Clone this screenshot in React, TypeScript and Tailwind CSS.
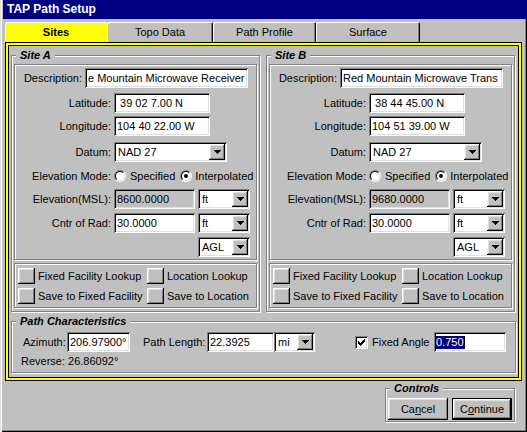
import React from "react";

const sunken =
  "shadow-[inset_1px_1px_0_#808080,inset_-1px_-1px_0_#ffffff,inset_2px_2px_0_#000000,inset_-2px_-2px_0_#dfdfdf]";
const raised =
  "shadow-[inset_-1px_-1px_0_#000000,inset_1px_1px_0_#ffffff,inset_-2px_-2px_0_#808080,inset_2px_2px_0_#dfdfdf]";
const etched = "border border-[#808080] shadow-[inset_1px_1px_0_#ffffff,1px_1px_0_#ffffff]";

function DropArrow() {
  return (
    <svg width="7" height="4" viewBox="0 0 7 4" shapeRendering="crispEdges">
      <path d="M0 0h7v1H0zM1 1h5v1H1zM2 2h3v1H2zM3 3h1v1H3z" fill="#000" />
    </svg>
  );
}

function DropBtn() {
  return (
    <div className={`w-[16px] h-[16px] shrink-0 bg-[#c0c0c0] ${raised} flex items-center justify-center`}>
      <DropArrow />
    </div>
  );
}

function Select({ cls, value }: { cls: string; value: string }) {
  return (
    <div className={`${cls} h-[20px] shrink-0 bg-white ${sunken} flex items-center pl-[4px] pr-[2px]`}>
      <span className="flex-1 whitespace-nowrap">{value}</span>
      <DropBtn />
    </div>
  );
}

function TextBox({ cls, value, disabled }: { cls: string; value: string; disabled?: boolean }) {
  return (
    <div
      className={`${cls} h-[20px] shrink-0 ${disabled ? "bg-[#c0c0c0]" : "bg-white"} ${sunken} flex items-center pl-[3px] whitespace-pre overflow-hidden`}
    >
      {value}
    </div>
  );
}

function Radio({ checked }: { checked?: boolean }) {
  return (
    <span className="w-[12px] h-[12px] shrink-0 rounded-full border border-t-[#808080] border-l-[#808080] border-r-white border-b-white flex">
      <span className="flex-1 rounded-full bg-white border border-t-black border-l-black border-r-[#dfdfdf] border-b-[#dfdfdf] flex items-center justify-center">
        {checked && <span className="w-[4px] h-[4px] rounded-full bg-black" />}
      </span>
    </span>
  );
}

function Checkbox() {
  return (
    <span className={`w-[13px] h-[13px] shrink-0 bg-white ${sunken} flex items-center justify-center`}>
      <svg width="7" height="7" viewBox="0 0 7 7" shapeRendering="crispEdges">
        <path
          d="M6 0h1v1H6zM5 1h2v1H5zM0 2h1v1H0zM4 2h3v1H4zM0 3h2v1H0zM3 3h3v1H3zM0 4h5v1H0zM1 5h3v1H1zM2 6h1v1H2z"
          fill="#000"
        />
      </svg>
    </span>
  );
}

function SquareBtn() {
  return <span className={`w-[17px] h-[16px] shrink-0 bg-[#c0c0c0] ${raised}`} />;
}

function GroupTitle({ children }: { children: React.ReactNode }) {
  return (
    <span className="absolute -top-[7px] left-[4px] px-[4px] bg-[#c0c0c0] font-bold italic leading-[13px] whitespace-nowrap">
      {children}
    </span>
  );
}

function Label({ cls, children }: { cls: string; children: React.ReactNode }) {
  return <span className={`${cls} shrink-0 text-right whitespace-nowrap`}>{children}</span>;
}

function Site({
  title,
  desc,
  lat,
  lon,
  elev,
}: {
  title: string;
  desc: string;
  lat: string;
  lon: string;
  elev: string;
}) {
  return (
    <div className={`relative w-[249px] h-[257px] ${etched} pt-[8px] px-[2px] flex flex-col`}>
      <GroupTitle>{title}</GroupTitle>
      <div className={`${etched} h-[196px] flex flex-col pt-[3px]`}>
        <div className="flex items-center h-[20px]">
          <Label cls="w-[67px]">Description:</Label>
          <TextBox cls="w-[163px] ml-[3px]" value={desc} />
        </div>
        <div className="flex items-center h-[20px] mt-[5px]">
          <Label cls="w-[96px]">Latitude:</Label>
          <TextBox cls="w-[96px] ml-[3px]" value={lat} />
        </div>
        <div className="flex items-center h-[20px] mt-[3px]">
          <Label cls="w-[96px]">Longitude:</Label>
          <TextBox cls="w-[96px] ml-[3px]" value={lon} />
        </div>
        <div className="flex items-center h-[20px] mt-[6px]">
          <Label cls="w-[96px]">Datum:</Label>
          <Select cls="w-[113px] ml-[3px]" value="NAD 27" />
        </div>
        <div className="flex items-center h-[14px] mt-[7px]">
          <Label cls="w-[96px]">Elevation Mode:</Label>
          <span className="ml-[3px] flex items-center">
            <Radio />
          </span>
          <span className="ml-[4px] whitespace-nowrap">Specified</span>
          <span className="ml-[5px] flex items-center">
            <Radio checked />
          </span>
          <span className="ml-[3px] whitespace-nowrap">Interpolated</span>
        </div>
        <div className="flex items-center h-[20px] mt-[6px]">
          <Label cls="w-[96px]">Elevation(MSL):</Label>
          <TextBox cls="w-[81px] ml-[3px]" value={elev} disabled />
          <Select cls="w-[52px] ml-[3px]" value="ft" />
        </div>
        <div className="flex items-center h-[20px] mt-[4px]">
          <Label cls="w-[96px]">Cntr of Rad:</Label>
          <TextBox cls="w-[81px] ml-[3px]" value="30.0000" />
          <Select cls="w-[52px] ml-[3px]" value="ft" />
        </div>
        <div className="flex items-center h-[20px] mt-[4px]">
          <Select cls="w-[52px] ml-[183px]" value="AGL" />
        </div>
      </div>
      <div className={`${etched} h-[45px] mt-[3px] pt-[4px] pl-[3px] grid grid-cols-[129px_auto] gap-y-[4px] content-start`}>
        <div className="flex items-center gap-[3px] h-[16px]">
          <SquareBtn />
          <span className="whitespace-nowrap">Fixed Facility Lookup</span>
        </div>
        <div className="flex items-center gap-[3px] h-[16px]">
          <SquareBtn />
          <span className="whitespace-nowrap">Location Lookup</span>
        </div>
        <div className="flex items-center gap-[3px] h-[16px]">
          <SquareBtn />
          <span className="whitespace-nowrap">Save to Fixed Facility</span>
        </div>
        <div className="flex items-center gap-[3px] h-[16px]">
          <SquareBtn />
          <span className="whitespace-nowrap">Save to Location</span>
        </div>
      </div>
    </div>
  );
}

function Tab({ label, cls, selected }: { label: string; cls: string; selected?: boolean }) {
  return (
    <div
      className={`${cls} h-[20px] flex items-center justify-center rounded-tl-[2px] rounded-tr-[2px] ${
        selected
          ? "bg-[#ffff00] font-bold shadow-[inset_1px_1px_0_#ffffff]"
          : "bg-[#c0c0c0] shadow-[inset_1px_1px_0_#ffffff,inset_-1px_0_0_#000000,inset_-2px_0_0_#808080]"
      }`}
    >
      {label}
    </div>
  );
}

function PushButton({ children, isDefault }: { children: React.ReactNode; isDefault?: boolean }) {
  if (isDefault) {
    return (
      <div className="w-[60px] h-[22px] border border-black flex">
        <div className={`flex-1 bg-[#c0c0c0] ${raised} flex items-center justify-center`}>{children}</div>
      </div>
    );
  }
  return (
    <div className={`w-[60px] h-[22px] bg-[#c0c0c0] ${raised} flex items-center justify-center`}>{children}</div>
  );
}

export default function App() {
  return (
    <div className="w-[527px] h-[432px] bg-[#c0c0c0] flex flex-col overflow-hidden text-[11px] leading-[13px] text-black [font-family:'Liberation_Sans',Arial,sans-serif] shadow-[inset_1px_0_0_#dfdfdf,inset_2px_0_0_#ffffff,inset_-1px_-1px_0_#000000,inset_-2px_-2px_0_#808080]">
      <div className="h-[19px] ml-[3px] bg-[#000080] text-white font-bold text-[12px] flex items-center pl-[4px]">
        TAP Path Setup
      </div>
      <div className="mt-[3px] ml-[5px] flex">
        <Tab label="Sites" cls="w-[102px]" selected />
        <Tab label="Topo Data" cls="w-[106px]" />
        <Tab label="Path Profile" cls="w-[103px]" />
        <Tab label="Surface" cls="w-[104px]" />
      </div>
      <div className="ml-[5px] w-[517px] h-[339px] shrink-0 border border-black shadow-[inset_0_0_0_2px_#ffff00,inset_0_0_0_3px_#000000] pt-[12px] pl-[5px] flex flex-col">
        <div className="flex gap-[6px]">
          <Site
            title="Site A"
            desc="e Mountain Microwave Receiver"
            lat=" 39 02 7.00 N"
            lon="104 40 22.00 W"
            elev="8600.0000"
          />
          <Site
            title="Site B"
            desc="Red Mountain Microwave Trans"
            lat=" 38 44 45.00 N"
            lon="104 51 39.00 W"
            elev="9680.0000"
          />
        </div>
        <div className={`relative mt-[9px] w-[505px] h-[52px] ${etched} pt-[10px] pl-[9px] flex flex-col`}>
          <GroupTitle>Path Characteristics</GroupTitle>
          <div className="flex items-center h-[20px]">
            <span className="w-[46px] shrink-0 pl-[2px] whitespace-nowrap">Azimuth:</span>
            <TextBox cls="w-[63px]" value="206.97900°" />
            <span className="w-[77px] shrink-0 pl-[13px] whitespace-nowrap">Path Length:</span>
            <TextBox cls="w-[67px]" value="22.3925" />
            <Select cls="w-[41px]" value="mi" />
            <span className="ml-[40px] flex items-center">
              <Checkbox />
            </span>
            <span className="w-[66px] shrink-0 pl-[4px] whitespace-nowrap">Fixed Angle</span>
            <div className={`w-[72px] h-[20px] shrink-0 bg-white ${sunken} flex items-center pl-[2px]`}>
              <span className="bg-[#000080] text-white leading-[13px]">0.750</span>
              <span className="w-[1px] h-[13px] bg-black" />
            </div>
          </div>
          <div className="mt-[3px] whitespace-nowrap">Reverse: 26.86092°</div>
        </div>
      </div>
      <div className="flex justify-end mt-[7px] mr-[12px]">
        <div className={`relative w-[130px] h-[34px] ${etched} pt-[9px] pl-[2px] flex gap-[4px]`}>
          <GroupTitle>Controls</GroupTitle>
          <PushButton>
            <span>
              Ca<span className="underline underline-offset-[1px]">n</span>cel
            </span>
          </PushButton>
          <PushButton isDefault>
            <span>
              C<span className="underline underline-offset-[1px]">o</span>ntinue
            </span>
          </PushButton>
        </div>
      </div>
    </div>
  );
}
